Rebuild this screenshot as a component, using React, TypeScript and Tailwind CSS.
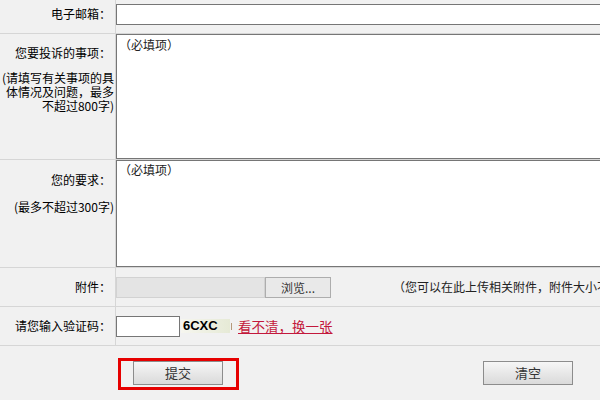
export default function App() {
  const label = "flex w-[116px] shrink-0 flex-col items-end border-r border-[#d6d6d6] text-right";
  const btn =
    "h-[24px] w-[90px] shrink-0 border border-[#8c8c8c] bg-gradient-to-b from-[#f6f6f6] to-[#dadada] text-[13px] text-[#333] leading-[22px]";

  return (
    <div className="h-[400px] w-[600px] overflow-hidden bg-[#f1f1f1] font-['Noto_Sans_CJK_SC','Noto_Sans',sans-serif] text-[12px] text-black">
      {/* email */}
      <div className="flex h-[34px] border-b border-[#d6d6d6]">
        <div className={`${label} pr-[4px] pt-[6px] leading-[16px]`}>电子邮箱：</div>
        <div className="min-w-0 flex-1">
          <input className="mt-[4px] h-[21px] w-[560px] border border-[#767676] bg-white outline-none" />
        </div>
      </div>

      {/* complaint */}
      <div className="flex h-[126px] border-b border-[#d6d6d6]">
        <div className={`${label} pr-[1px] pt-[12px] leading-[14px]`}>
          <div className="pr-[3px]">您要投诉的事项：</div>
          <div className="mt-[11px]">
            (请填写有关事项的具
            <br />
            体情况及问题，最多
            <br />
            不超过800字)
          </div>
        </div>
        <div className="min-w-0 flex-1">
          <textarea
            defaultValue="（必填项）"
            className="block h-[125px] w-[560px] resize-none border border-[#767676] bg-white px-[2px] pt-[2px] text-[12px] leading-[16px] text-[#222] outline-none"
          />
        </div>
      </div>

      {/* requirement */}
      <div className="flex h-[108px] border-b border-[#d6d6d6]">
        <div className={`${label} pr-[1px] pt-[13px] leading-[14px]`}>
          <div className="pr-[3px]">您的要求：</div>
          <div className="mt-[13px]">(最多不超过300字)</div>
        </div>
        <div className="min-w-0 flex-1">
          <textarea
            defaultValue="（必填项）"
            className="block h-[107px] w-[560px] resize-none border border-[#767676] bg-white px-[2px] pt-[1px] text-[12px] leading-[16px] text-[#222] outline-none"
          />
        </div>
      </div>

      {/* attachment */}
      <div className="flex h-[39px] border-b border-[#d6d6d6]">
        <div className={`${label} justify-center pr-[4px]`}>附件：</div>
        <div className="flex min-w-0 flex-1 items-center whitespace-nowrap">
          <div className="h-[21px] w-[149px] shrink-0 border border-[#d2d2d2] bg-[#e4e4e4]" />
          <div className="h-[21px] w-[66px] shrink-0 border border-[#adadad] bg-[#e9e9e9] text-center leading-[19px] text-[#333]">
            浏览...
          </div>
          <span className="ml-[62px] shrink-0 text-[#222]">（您可以在此上传相关附件，附件大小不超过2M）</span>
        </div>
      </div>

      {/* captcha */}
      <div className="flex h-[39px] border-b border-[#d6d6d6]">
        <div className={`${label} justify-center pr-[4px]`}>请您输入验证码：</div>
        <div className="flex min-w-0 flex-1 items-center">
          <input className="h-[21px] w-[64px] shrink-0 border border-[#767676] bg-white outline-none" />
          <div className="ml-[1px] flex h-[14px] w-[49px] shrink-0 items-center bg-gradient-to-r from-[#f6f6ef] to-[#e6ead6] pl-[2px] font-['Liberation_Sans',sans-serif] text-[13px] font-bold text-black">
            6CXC
          </div>
          <div className="ml-[1px] h-[7px] w-[1px] bg-[#b59a7a]" />
          <a className="ml-[6px] text-[13.5px] text-[#c3183c] underline">看不清，换一张</a>
        </div>
      </div>

      {/* buttons */}
      <div className="relative flex pl-[133px] pt-[15px]">
        <button className={btn}>提交</button>
        <button className={`${btn} ml-[260px]`}>清空</button>
        <div className="absolute left-[118px] top-[12px] h-[32px] w-[121px] border-[3px] border-[#e60000]" />
      </div>
    </div>
  );
}
